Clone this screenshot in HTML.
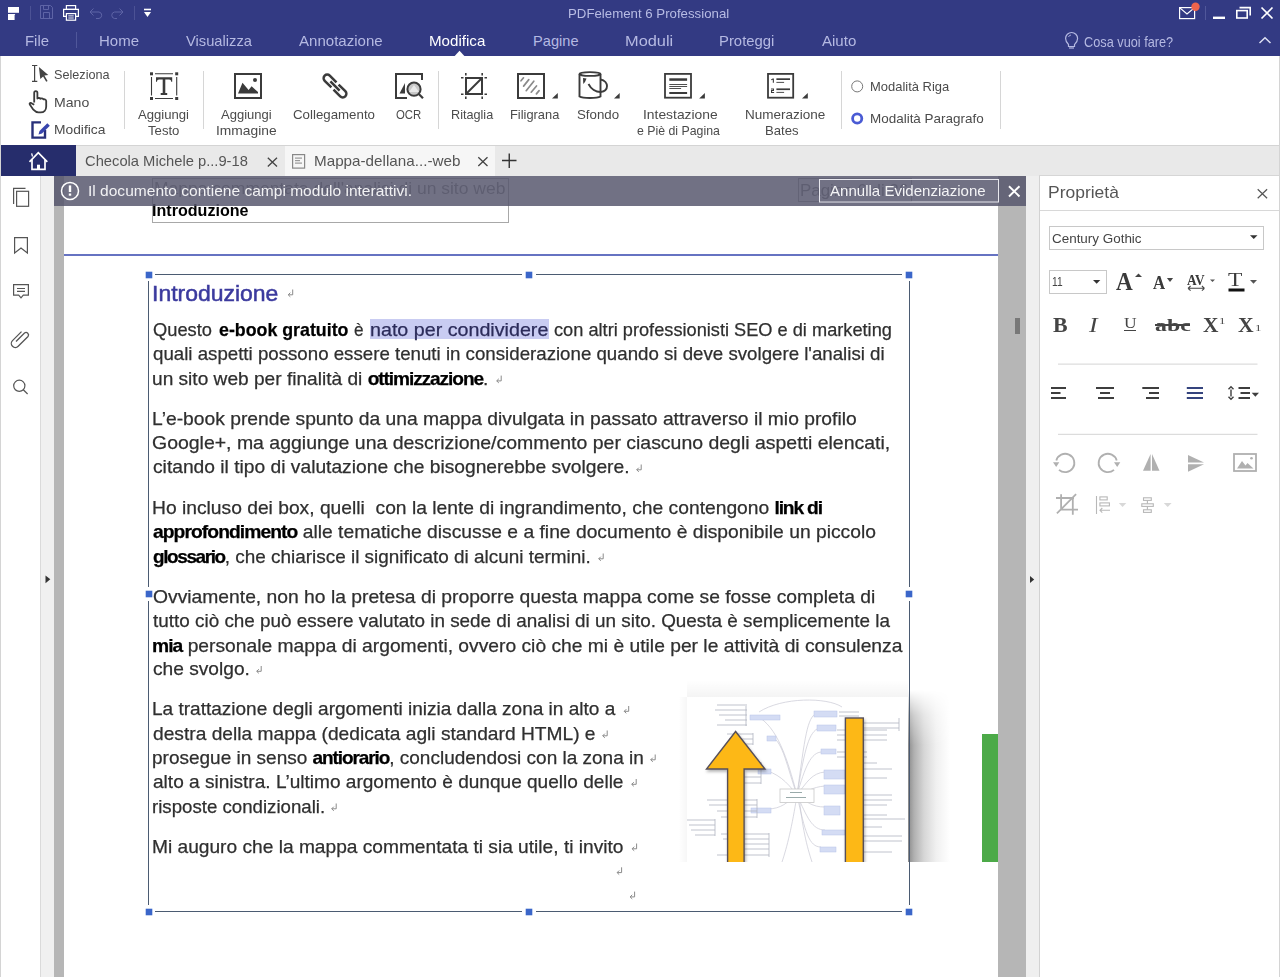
<!DOCTYPE html>
<html><head><meta charset="utf-8">
<style>
*{margin:0;padding:0;box-sizing:border-box}
html,body{width:1280px;height:977px;overflow:hidden;background:#fff;font-family:"Liberation Sans",sans-serif;position:relative}
.a{position:absolute}
.t{position:absolute;white-space:nowrap;line-height:1;transform-origin:0 0}
b{font-weight:700;color:#000}
svg{position:absolute;overflow:visible}
</style></head><body>
<div class="a" style="left:0;top:0;width:1280px;height:56px;background:#333a83"></div><svg style="left:0;top:0" width="200" height="28"><g fill="#fff"><rect x="8" y="7" width="11" height="5.8"/><path d="M8 14H15.3L14.6 15.2V20H8Z"/></g><rect x="30" y="6" width="1" height="14" fill="#4c5295"/><rect x="134" y="6" width="1" height="14" fill="#4c5295"/><g fill="none" stroke="#5e64a6" stroke-width="1"><path d="M40.5 5.5H50.5L52.5 7.5V18.5H40.5Z"/><path d="M43.5 5.5V9.5H48.5V5.5"/><path d="M43.5 18.5V12.5H49.5V18.5"/></g><g fill="none" stroke="#fff" stroke-width="1.2"><rect x="66.4" y="5.6" width="9.2" height="3.8"/><path d="M66.4 16.4H63.6V9.4H78.4V16.4H75.6"/><rect x="66.4" y="13.6" width="9.2" height="6.6"/></g><path d="M68.3 15.9H73.7M68.3 18H73.7" stroke="#fff" stroke-width="0.9"/><g fill="none" stroke="#5e64a6" stroke-width="1"><path d="M90.5 12H99A3.3 3.3 0 0 1 99 18.5H96"/><path d="M93.5 8.5L90 12L93.5 15.5"/><path d="M123 12H114.5A3.3 3.3 0 0 0 114.5 18.5H117"/><path d="M119.5 8.5L123 12L119.5 15.5"/></g><g fill="#fff"><rect x="144" y="8.7" width="7" height="1.6"/><path d="M144 12H151L147.5 16.9Z"/></g></svg><div class="t" style="left:567.72px;top:7.03px;font-size:13.50px;color:#b8bce4;font-weight:400;font-family:'Liberation Sans',sans-serif;transform:scaleX(0.9810);">PDFelement 6 Professional</div>
<svg style="left:1160px;top:0" width="120" height="28"><g fill="none" stroke="#fff" stroke-width="1.2"><rect x="19.6" y="7.6" width="15" height="11"/><path d="M19.6 7.6L27 14L34.6 7.6"/></g><circle cx="35.5" cy="6.8" r="4.2" fill="#f0644c"/><rect x="45" y="6" width="1" height="14" fill="#50579a"/><rect x="53" y="16.6" width="12" height="2.4" fill="#fff"/><g fill="none" stroke="#fff" stroke-width="1.6"><rect x="76.8" y="10.6" width="10.4" height="7.4"/><path d="M79.5 7.6H90.2V15.5"/></g><g stroke="#fff" stroke-width="1.7"><path d="M101.5 7.5L112.5 18.5M112.5 7.5L101.5 18.5"/></g></svg><div class="t" style="left:24.58px;top:34.09px;font-size:14.60px;color:#b5b9e2;font-weight:400;font-family:'Liberation Sans',sans-serif;transform:scaleX(1.0232);">File</div>
<div class="t" style="left:99.10px;top:34.09px;font-size:14.60px;color:#b5b9e2;font-weight:400;font-family:'Liberation Sans',sans-serif;transform:scaleX(1.0270);">Home</div>
<div class="t" style="left:185.60px;top:34.09px;font-size:14.60px;color:#b5b9e2;font-weight:400;font-family:'Liberation Sans',sans-serif;transform:scaleX(1.0078);">Visualizza</div>
<div class="t" style="left:298.60px;top:34.09px;font-size:14.60px;color:#b5b9e2;font-weight:400;font-family:'Liberation Sans',sans-serif;transform:scaleX(1.0309);">Annotazione</div>
<div class="t" style="left:429.06px;top:34.09px;font-size:14.60px;color:#ffffff;font-weight:400;font-family:'Liberation Sans',sans-serif;transform:scaleX(1.0370);">Modifica</div>
<div class="t" style="left:533.10px;top:34.09px;font-size:14.60px;color:#b5b9e2;font-weight:400;font-family:'Liberation Sans',sans-serif;">Pagine</div>
<div class="t" style="left:624.98px;top:34.09px;font-size:14.60px;color:#b5b9e2;font-weight:400;font-family:'Liberation Sans',sans-serif;transform:scaleX(1.1220);">Moduli</div>
<div class="t" style="left:718.58px;top:34.09px;font-size:14.60px;color:#b5b9e2;font-weight:400;font-family:'Liberation Sans',sans-serif;transform:scaleX(1.0189);">Proteggi</div>
<div class="t" style="left:822.10px;top:34.09px;font-size:14.60px;color:#b5b9e2;font-weight:400;font-family:'Liberation Sans',sans-serif;transform:scaleX(1.0303);">Aiuto</div>
<div class="t" style="left:1084.10px;top:34.69px;font-size:14.60px;color:#b5b9e2;font-weight:400;font-family:'Liberation Sans',sans-serif;transform:scaleX(0.8725);">Cosa vuoi fare?</div>
<svg style="left:0;top:28px" width="1280" height="28"><rect x="76" y="4" width="1" height="16" fill="#50579a"/><path d="M454.7 28L459.5 22.8L464.4 28Z" fill="#fff"/><g fill="none" stroke="#b5b9e2" stroke-width="1.2"><path d="M1068.5 16.5C1067 15 1065.6 13.5 1065.6 10.5A6 6 0 0 1 1077.6 10.5C1077.6 13.5 1076 15 1074.5 16.5V18.5H1068.5Z"/><path d="M1069 20H1074"/><path d="M1068.5 9A3 3 0 0 1 1071 7" stroke-width="0.9"/></g><path d="M1259.5 15L1265 9.8L1270.5 15" fill="none" stroke="#dfe1f2" stroke-width="1.5"/></svg><div class="a" style="left:0;top:56px;width:1280px;height:90px;background:#fff;border-left:1px solid #d4d4d4;border-right:1px solid #d4d4d4;border-bottom:1px solid #d4d4d4"></div><svg style="left:0;top:0" width="1280" height="145"><g fill="#d6d6d6"><rect x="124" y="71" width="1" height="58"/><rect x="203" y="71" width="1" height="58"/><rect x="438" y="71" width="1" height="58"/><rect x="841" y="71" width="1" height="58"/><rect x="1000" y="71" width="1" height="58"/></g><g fill="none" stroke="#444" stroke-width="1.2"><path d="M32 65.5H37.3M32 81.4H37.3M34.6 65.5V81.4"/></g><path d="M38.9 67.1L48.3 75.1L44.4 75.6L47.6 81L46.2 81.8L43.1 76.6L40.3 79Z" fill="#444"/><path d="M34.2 102.5V92.8A1.6 1.6 0 0 1 37.4 92.8V98.5C38 97.8 39.6 97.8 40.4 98.8C41.2 98.2 42.8 98.3 43.4 99.4C44.4 99 46.2 99.6 46.2 101V106.5C46.2 110 44 112.4 40.6 112.4H38.4C35.8 112.4 34.6 111 33.2 109.5L29.8 104.6C29.2 103.6 30 102.6 31 102.9L34.2 104.8" fill="none" stroke="#3b3b3b" stroke-width="1.8" stroke-linejoin="round"/><path d="M41 122.4H32.5V137.6H45V130" fill="none" stroke="#28307a" stroke-width="2.4"/><path d="M38.5 134.5L39.5 131L47.3 123.2L49.8 125.7L42 133.5Z" fill="#3845ad"/><g fill="#3b3b3b"><rect x="150" y="72.3" width="3" height="3"/><rect x="175.2" y="72.3" width="3" height="3"/><rect x="150" y="97" width="3" height="3"/><rect x="175.2" y="97" width="3" height="3"/></g><g stroke="#3b3b3b" stroke-width="1.1"><path d="M155 73.8H173M155 98.5H173M151.5 77V95.5M176.7 77V95.5"/></g><path d="M156 77.2H172.2V81.8H171.2C171 80.2 170.6 79.4 169 79.4H165.3V92.9H167.2V95H160.7V92.9H162.7V79.4H159.2C157.6 79.4 157.2 80.2 157 81.8H156Z" fill="#3b3b3b"/><rect x="235" y="74" width="26" height="24" fill="none" stroke="#3b3b3b" stroke-width="2"/><path d="M238 93.6L242.5 82.8L248.6 89.9L251.6 86.3L258 91.9V93.6Z" fill="#3b3b3b"/><circle cx="255" cy="80" r="2" fill="#3b3b3b"/><g transform="translate(335 86) rotate(45)" fill="none" stroke="#3b3b3b" stroke-width="2.5"><path d="M-1.5 -3.6H-11A3.6 3.6 0 0 0 -11 3.6H-1.5M1.5 -3.6H11A3.6 3.6 0 0 1 11 3.6H1.5M-6.5 0H6.5"/></g><path d="M407 98H396V74H422V80" fill="none" stroke="#3b3b3b" stroke-width="2"/><path d="M399.5 93.4L405 83V93.4Z" fill="#3b3b3b"/><circle cx="414" cy="89.2" r="6.6" fill="#c8c8c8" stroke="#3b3b3b" stroke-width="2"/><path d="M409 92L414 85L419 92Z" fill="#fff" opacity="0.6"/><path d="M418.8 94L423 98.3" stroke="#3b3b3b" stroke-width="2.2"/><rect x="466" y="78" width="16" height="16" fill="none" stroke="#3b3b3b" stroke-width="2"/><path d="M466.5 93.5L481.5 78.5" stroke="#3b3b3b" stroke-width="2"/><g stroke="#3b3b3b" stroke-width="1.6"><path d="M461 77.8H463.5M484.5 77.8H487M461 94.2H463.5M484.5 94.2H487M465.8 73V75.5M482.2 73V75.5M465.8 96.5V99M482.2 96.5V99"/></g><rect x="518" y="74" width="26" height="24" fill="none" stroke="#3b3b3b" stroke-width="2"/><g stroke="#8a8a8a" stroke-width="1.7" stroke-linecap="round"><path d="M521 80.8L523.5 77.8M523.6 86.1L528.8 79.6M526.2 90.7L533.8 81.2M531.2 92.2L536.5 86M536.4 93.9L539.1 90.6"/></g><path d="M552 98.6L557.8 93V98.6Z" fill="#3b3b3b"/><g fill="none" stroke="#3b3b3b" stroke-width="1.9"><ellipse cx="590" cy="74" rx="10.5" ry="1.9"/><path d="M579.5 74V96.5C583 98.5 597 98.5 600.5 96.5V74"/><path d="M588.5 84C591 89 596 92 600.5 92"/><path d="M600.5 79.5C605 80 607 83.5 607 86C607 89 604.5 91.5 600.5 92"/></g><path d="M583 78L586.5 78.5L585 82L583.3 84Z" fill="#3b3b3b"/><path d="M614 98.6L619.7 93V98.6Z" fill="#3b3b3b"/><rect x="665" y="73.9" width="26" height="23.8" fill="none" stroke="#3b3b3b" stroke-width="1.8"/><g fill="#3b3b3b"><rect x="669.3" y="78.3" width="17.8" height="2.5"/><rect x="669.3" y="84" width="17.8" height="0.9"/><rect x="669.3" y="86" width="17.8" height="0.9"/><rect x="669.3" y="88" width="11.8" height="0.9"/><rect x="669.3" y="92" width="17.8" height="2"/></g><path d="M699.2 98.6L704.9 93V98.6Z" fill="#3b3b3b"/><rect x="768" y="73.9" width="25.2" height="23.8" fill="none" stroke="#3b3b3b" stroke-width="1.8"/><g fill="#3b3b3b"><path d="M771.2 79.2L772.8 78.4H773.9V82.8H772.8V79.8L771.2 80.3Z"/><rect x="776.4" y="78.3" width="13.6" height="1.7"/><rect x="776.4" y="81.9" width="7.7" height="0.9"/><path d="M771 88.4H774V90.9H772.1V91.9H774.1V93H771V90H773V89.4H771Z"/><rect x="776.4" y="88.4" width="13.6" height="1.7"/><rect x="776.4" y="91.9" width="7.7" height="0.9"/></g><path d="M802 98.6L807.8 93V98.6Z" fill="#3b3b3b"/><circle cx="857.2" cy="86.4" r="5.5" fill="#fff" stroke="#777" stroke-width="1"/><circle cx="857.2" cy="118.5" r="4.6" fill="#fff" stroke="#4a5bd4" stroke-width="2.8"/></svg><div class="t" style="left:54.40px;top:68.62px;font-size:12.80px;color:#4b4b4b;font-weight:400;font-family:'Liberation Sans',sans-serif;transform:scaleX(0.9891);">Seleziona</div>
<div class="t" style="left:54.31px;top:96.62px;font-size:12.80px;color:#4b4b4b;font-weight:400;font-family:'Liberation Sans',sans-serif;transform:scaleX(1.1004);">Mano</div>
<div class="t" style="left:54.32px;top:124.32px;font-size:12.80px;color:#4b4b4b;font-weight:400;font-family:'Liberation Sans',sans-serif;transform:scaleX(1.0787);">Modifica</div>
<div class="t" style="left:137.60px;top:108.72px;font-size:12.80px;color:#4b4b4b;font-weight:400;font-family:'Liberation Sans',sans-serif;transform:scaleX(1.0246);">Aggiungi</div>
<div class="t" style="left:148.00px;top:124.52px;font-size:12.80px;color:#4b4b4b;font-weight:400;font-family:'Liberation Sans',sans-serif;transform:scaleX(1.0272);">Testo</div>
<div class="t" style="left:221.40px;top:108.72px;font-size:12.80px;color:#4b4b4b;font-weight:400;font-family:'Liberation Sans',sans-serif;transform:scaleX(1.0185);">Aggiungi</div>
<div class="t" style="left:215.73px;top:124.52px;font-size:12.80px;color:#4b4b4b;font-weight:400;font-family:'Liberation Sans',sans-serif;transform:scaleX(1.0782);">Immagine</div>
<div class="t" style="left:292.60px;top:108.72px;font-size:12.80px;color:#4b4b4b;font-weight:400;font-family:'Liberation Sans',sans-serif;transform:scaleX(1.0380);">Collegamento</div>
<div class="t" style="left:395.70px;top:108.72px;font-size:12.80px;color:#4b4b4b;font-weight:400;font-family:'Liberation Sans',sans-serif;transform:scaleX(0.8898);">OCR</div>
<div class="t" style="left:451.11px;top:108.72px;font-size:12.80px;color:#4b4b4b;font-weight:400;font-family:'Liberation Sans',sans-serif;transform:scaleX(0.9882);">Ritaglia</div>
<div class="t" style="left:510.39px;top:108.72px;font-size:12.80px;color:#4b4b4b;font-weight:400;font-family:'Liberation Sans',sans-serif;transform:scaleX(1.0043);">Filigrana</div>
<div class="t" style="left:576.54px;top:108.72px;font-size:12.80px;color:#4b4b4b;font-weight:400;font-family:'Liberation Sans',sans-serif;transform:scaleX(1.0389);">Sfondo</div>
<div class="t" style="left:642.72px;top:108.72px;font-size:12.80px;color:#4b4b4b;font-weight:400;font-family:'Liberation Sans',sans-serif;transform:scaleX(1.0824);">Intestazione</div>
<div class="t" style="left:636.80px;top:124.52px;font-size:12.80px;color:#4b4b4b;font-weight:400;font-family:'Liberation Sans',sans-serif;transform:scaleX(0.9629);">e Piè di Pagina</div>
<div class="t" style="left:745.34px;top:108.72px;font-size:12.80px;color:#4b4b4b;font-weight:400;font-family:'Liberation Sans',sans-serif;transform:scaleX(1.0560);">Numerazione</div>
<div class="t" style="left:764.58px;top:124.52px;font-size:12.80px;color:#4b4b4b;font-weight:400;font-family:'Liberation Sans',sans-serif;transform:scaleX(1.0253);">Bates</div>
<div class="t" style="left:869.59px;top:80.82px;font-size:12.80px;color:#4b4b4b;font-weight:400;font-family:'Liberation Sans',sans-serif;transform:scaleX(1.0130);">Modalità Riga</div>
<div class="t" style="left:869.55px;top:112.72px;font-size:12.80px;color:#4b4b4b;font-weight:400;font-family:'Liberation Sans',sans-serif;transform:scaleX(1.0514);">Modalità Paragrafo</div>
<div class="a" style="left:0;top:146px;width:1280px;height:30px;background:#e9e9e9"></div><div class="a" style="left:1039px;top:175px;width:241px;height:1px;background:#d6d6d6"></div><div class="a" style="left:0;top:145px;width:1px;height:832px;background:#d4d4d4"></div><div class="a" style="left:1279px;top:145px;width:1px;height:832px;background:#d4d4d4"></div><div class="a" style="left:1px;top:145px;width:75px;height:31px;background:#262d6c"></div><div class="a" style="left:285px;top:146px;width:210px;height:30px;background:#f6f6f6"></div><svg style="left:0;top:145px" width="1280" height="31"><g fill="none" stroke="#fff" stroke-width="1.7"><path d="M29.5 16.8L38.3 7.6L47.3 16.8"/><path d="M32 14.3V24.4H45V14.3"/></g><rect x="37" y="19.7" width="3" height="4.7" fill="#fff"/><path d="M31 8.5L32.3 8.2L33 11L32 12Z" fill="#fff"/><g stroke="#444" stroke-width="1.3"><path d="M267.8 12.8L277 21.5M277 12.8L267.8 21.5"/><path d="M478.3 12.3L487.5 21M487.5 12.3L478.3 21"/></g><g stroke="#333" stroke-width="1.4"><path d="M502 15.5H516.5M509.25 8.5V23"/></g><rect x="292.6" y="9.6" width="12" height="13.5" fill="#f6f6f6" stroke="#888" stroke-width="1.2"/><g fill="#999"><rect x="295" y="12.5" width="7" height="1.2"/><rect x="295" y="15" width="5" height="1.2"/><rect x="295" y="17.5" width="7" height="1.2"/></g></svg><div class="t" style="left:85.10px;top:153.86px;font-size:14.40px;color:#555;font-weight:400;font-family:'Liberation Sans',sans-serif;transform:scaleX(1.0233);">Checola Michele p...9-18</div>
<div class="t" style="left:313.64px;top:153.86px;font-size:14.40px;color:#555;font-weight:400;font-family:'Liberation Sans',sans-serif;transform:scaleX(1.0577);">Mappa-dellana...-web</div>
<div class="a" style="left:1px;top:176px;width:39px;height:801px;background:#fff"></div><div class="a" style="left:40px;top:176px;width:1px;height:801px;background:#dadada"></div><div class="a" style="left:41px;top:176px;width:13px;height:801px;background:#f0f0f0"></div><div class="a" style="left:54px;top:176px;width:10px;height:801px;background:#b6b6b6"></div><div class="a" style="left:64px;top:176px;width:934px;height:801px;background:#fff"></div><div class="a" style="left:998px;top:176px;width:28px;height:801px;background:#b6b6b6"></div><div class="a" style="left:1026px;top:176px;width:13px;height:801px;background:#efefef"></div><div class="a" style="left:1039px;top:176px;width:1px;height:801px;background:#d2d2d2"></div><div class="a" style="left:1015px;top:318px;width:5px;height:16px;background:#787878"></div><svg style="left:0;top:0" width="1280" height="977"><path d="M45.5 575.5L50.3 579.3L45.5 583.3Z" fill="#333"/><path d="M1030 576L1034.2 579.5L1030 583Z" fill="#333"/><g fill="none" stroke="#555" stroke-width="1.2"><path d="M13.6 204V188.3H25.5"/><rect x="16.6" y="191.3" width="12" height="15"/><path d="M14.6 237.6H27.4V253L21 248L14.6 253Z"/><path d="M13.6 284.6H28.4V295.2H23.3L21 297.8L18.7 295.2H13.6Z"/><path d="M17 288.5H25M17 291.4H25"/><path d="M16 341.5L24.5 333A2.5 2.5 0 0 1 28 336.5L18.2 346.3A4 4 0 0 1 12.5 340.6L21.5 331.6" stroke-width="1.3"/><circle cx="19.3" cy="385.8" r="5.6"/><path d="M23.3 389.8L27.6 394"/></g></svg><div class="a" style="left:152px;top:178px;width:357px;height:45px;border:1px solid #a8a8a8"></div><div class="a" style="left:798px;top:178px;width:114px;height:24px;border:1px solid #a8a8a8"></div><div class="t" style="left:153.59px;top:179.91px;font-size:17.40px;color:#8a8a8a;font-weight:400;font-family:'Liberation Sans',sans-serif;transform:scaleX(1.0057);">Mappa commentata dell'analisi di un sito web</div>
<div class="t" style="left:799.63px;top:181.71px;font-size:17.40px;color:#8a8a8a;font-weight:400;font-family:'Liberation Sans',sans-serif;transform:scaleX(0.9727);">Pagina 6 di 26</div>
<div class="t" style="left:152.14px;top:202.81px;font-size:16.70px;color:#000;font-weight:700;font-family:'Liberation Sans',sans-serif;transform:scaleX(0.9637);">Introduzione</div>
<div class="a" style="left:64px;top:254px;width:934px;height:2px;background:#6673c2"></div><div class="a" style="left:687px;top:680px;width:221px;height:17px;background:linear-gradient(rgba(0,0,0,0),rgba(0,0,0,0.045))"></div><div class="a" style="left:908px;top:690px;width:46px;height:172px;background:linear-gradient(90deg,#8a8a8a,#b0b0b0 6px,#d6d6d6 16px,#f0f0f0 28px,#fff 42px);-webkit-mask-image:linear-gradient(rgba(0,0,0,0),rgba(0,0,0,0.6) 25px,#000 55px)"></div><div class="a" style="left:679px;top:697px;width:8px;height:165px;background:linear-gradient(90deg,rgba(0,0,0,0),rgba(0,0,0,0.035))"></div><div class="a" style="left:982px;top:734px;width:16px;height:128px;background:#4caa48"></div><svg style="left:687px;top:697px;overflow:hidden" width="221" height="165"><rect x="0" y="0" width="221" height="165" fill="#fff"/><g fill="none" stroke="#c9c9d4" stroke-width="0.7"><path d="M110 98C100 60 90 30 70 19"/><path d="M110 98C100 70 96 45 85 40"/><path d="M110 98C100 85 90 75 75 73"/><path d="M110 98C100 105 95 112 80 112"/><path d="M110 98C118 40 120 20 130 16"/><path d="M110 98C118 50 122 35 132 31"/><path d="M110 98C118 70 124 55 135 55"/><path d="M110 98C120 85 125 76 138 75"/><path d="M110 98C120 95 125 90 138 89"/><path d="M110 98C120 105 125 110 138 110"/><path d="M110 98C120 120 125 133 138 133"/><path d="M110 98C118 135 122 150 134 150"/><path d="M110 98C105 130 100 150 95 165"/><path d="M112 98C115 130 120 150 125 165"/><path d="M72 15C95 0 140 0 155 10"/></g><g fill="#d4dcf4" stroke="#b8c4e8" stroke-width="0.5"><rect x="63" y="18" width="30" height="5"/><rect x="80" y="39" width="9" height="5"/><rect x="71" y="72" width="13" height="5"/><rect x="64" y="111" width="20" height="5"/><rect x="127" y="14" width="23" height="6"/><rect x="130" y="28" width="19" height="6"/><rect x="134" y="52" width="15" height="5"/><rect x="137" y="73" width="21" height="9"/><rect x="137" y="88" width="21" height="9"/><rect x="137" y="109" width="16" height="9"/><rect x="135" y="133" width="23" height="5"/><rect x="133" y="150" width="16" height="5"/></g><rect x="93" y="92" width="34" height="13.5" fill="#fff" stroke="#c8c8c8" stroke-width="0.8"/><g fill="#9aa"><rect x="103" y="95" width="12" height="1"/><rect x="99" y="100" width="20" height="1"/></g><g stroke="#b0b4c0" stroke-width="0.8" fill="none"><path d="M30 8H58M28 13H60M32 18H60M38 23H60M30 28H60M59 7V29"/><path d="M40 37H66M42 42H66M44 47H66M66 36V48"/><path d="M44 66H74M46 72H74M48 80H74M50 86H74M74 65V87"/><path d="M20 103H70M22 108H70M30 114H70M34 120H70M70 102V121"/><path d="M0 123H28M2 128H28M4 133H28M8 138H28M28 122V139"/><path d="M34 137H82M36 142H82M40 147H82M44 152H82M30 158H82M82 136V160"/><path d="M152 15H172M152 19H172M175 26H212M175 31H212M175 21V34M212 21V34"/><path d="M150 33H200M150 38H200M150 43H200"/><path d="M150 55H180M150 60H180M160 66H190M160 72H205"/><path d="M162 81H200M165 98H205M165 103H205M165 108H200"/><path d="M165 139H215M165 144H215M160 130H195M170 155H205M160 118H200M165 122H218"/></g><defs><filter id="ds" x="-30%" y="-30%" width="160%" height="160%"><feDropShadow dx="1" dy="2" stdDeviation="1.5" flood-color="#000" flood-opacity="0.3"/></filter></defs><g stroke="#57505a" stroke-width="1.4" fill="#fdb813" filter="url(#ds)"><path d="M48.6 34.5L19.5 72H40.6V170H57.1V72H78Z"/><rect x="158.4" y="21" width="17.9" height="150"/></g></svg><div class="a" style="left:370px;top:319px;width:179px;height:20px;background:#c9ccf2"></div><div class="t" style="left:152.11px;top:282.50px;font-size:22.00px;color:#3b3a9e;font-weight:400;font-family:'Liberation Sans',sans-serif;transform:scaleX(1.0437);-webkit-text-stroke:0.5px #3b3a9e;">Introduzione</div>
<div class="t" style="left:153.10px;top:345.39px;font-size:18.60px;color:#2f2f2f;font-weight:400;font-family:'Liberation Sans',sans-serif;transform:scaleX(1.0048);-webkit-text-stroke:0.25px;">quali aspetti possono essere tenuti in considerazione quando si deve svolgere l'analisi di</div>
<div class="t" style="left:152.07px;top:369.89px;font-size:18.60px;color:#2f2f2f;font-weight:400;font-family:'Liberation Sans',sans-serif;transform:scaleX(1.0277);-webkit-text-stroke:0.25px;">un sito web per finalità di <b style="letter-spacing:-1.057px">ottimizzazione</b>.</div>
<div class="t" style="left:152.06px;top:409.89px;font-size:18.60px;color:#2f2f2f;font-weight:400;font-family:'Liberation Sans',sans-serif;transform:scaleX(1.0361);-webkit-text-stroke:0.25px;">L’e-book prende spunto da una mappa divulgata in passato attraverso il mio profilo</div>
<div class="t" style="left:152.05px;top:434.09px;font-size:18.60px;color:#2f2f2f;font-weight:400;font-family:'Liberation Sans',sans-serif;transform:scaleX(1.0464);-webkit-text-stroke:0.25px;">Google+, ma aggiunge una descrizione/commento per ciascuno degli aspetti elencati,</div>
<div class="t" style="left:153.10px;top:458.49px;font-size:18.60px;color:#2f2f2f;font-weight:400;font-family:'Liberation Sans',sans-serif;transform:scaleX(1.0337);-webkit-text-stroke:0.25px;">citando il tipo di valutazione che bisognerebbe svolgere.</div>
<div class="t" style="left:152.07px;top:498.69px;font-size:18.60px;color:#2f2f2f;font-weight:400;font-family:'Liberation Sans',sans-serif;transform:scaleX(1.0348);-webkit-text-stroke:0.25px;">Ho incluso dei box, quelli&nbsp; con la lente di ingrandimento, che contengono <b style="letter-spacing:-1.143px">link di</b></div>
<div class="t" style="left:153.10px;top:523.29px;font-size:18.60px;color:#2f2f2f;font-weight:400;font-family:'Liberation Sans',sans-serif;transform:scaleX(1.0366);-webkit-text-stroke:0.25px;"><b style="letter-spacing:-0.906px">approfondimento</b> alle tematiche discusse e a fine documento è disponibile un piccolo</div>
<div class="t" style="left:153.10px;top:547.69px;font-size:18.60px;color:#2f2f2f;font-weight:400;font-family:'Liberation Sans',sans-serif;transform:scaleX(1.0175);-webkit-text-stroke:0.25px;"><b style="letter-spacing:-1.347px">glossario</b>, che chiarisce il significato di alcuni termini.</div>
<div class="t" style="left:153.10px;top:587.69px;font-size:18.60px;color:#2f2f2f;font-weight:400;font-family:'Liberation Sans',sans-serif;transform:scaleX(1.0368);-webkit-text-stroke:0.25px;">Ovviamente, non ho la pretesa di proporre questa mappa come se fosse completa di</div>
<div class="t" style="left:153.10px;top:611.89px;font-size:18.60px;color:#2f2f2f;font-weight:400;font-family:'Liberation Sans',sans-serif;transform:scaleX(1.0158);-webkit-text-stroke:0.25px;">tutto ciò che può essere valutato in sede di analisi di un sito. Questa è semplicemente la</div>
<div class="t" style="left:152.06px;top:636.69px;font-size:18.60px;color:#2f2f2f;font-weight:400;font-family:'Liberation Sans',sans-serif;transform:scaleX(1.0352);-webkit-text-stroke:0.25px;"><b style="letter-spacing:-0.923px">mia</b> personale mappa di argomenti, ovvero ciò che mi è utile per le attività di consulenza</div>
<div class="t" style="left:153.10px;top:660.39px;font-size:18.60px;color:#2f2f2f;font-weight:400;font-family:'Liberation Sans',sans-serif;transform:scaleX(1.0296);-webkit-text-stroke:0.25px;">che svolgo.</div>
<div class="t" style="left:152.08px;top:700.19px;font-size:18.60px;color:#2f2f2f;font-weight:400;font-family:'Liberation Sans',sans-serif;transform:scaleX(1.0232);-webkit-text-stroke:0.25px;">La trattazione degli argomenti inizia dalla zona in alto a</div>
<div class="t" style="left:153.10px;top:724.69px;font-size:18.60px;color:#2f2f2f;font-weight:400;font-family:'Liberation Sans',sans-serif;transform:scaleX(1.0317);-webkit-text-stroke:0.25px;">destra della mappa (dedicata agli standard HTML) e</div>
<div class="t" style="left:152.08px;top:748.69px;font-size:18.60px;color:#2f2f2f;font-weight:400;font-family:'Liberation Sans',sans-serif;transform:scaleX(1.0219);-webkit-text-stroke:0.25px;">prosegue in senso <b style="letter-spacing:-1.072px">antiorario</b>, concludendosi con la zona in</div>
<div class="t" style="left:153.10px;top:773.19px;font-size:18.60px;color:#2f2f2f;font-weight:400;font-family:'Liberation Sans',sans-serif;transform:scaleX(1.0251);-webkit-text-stroke:0.25px;">alto a sinistra. L’ultimo argomento è dunque quello delle</div>
<div class="t" style="left:152.10px;top:797.89px;font-size:18.60px;color:#2f2f2f;font-weight:400;font-family:'Liberation Sans',sans-serif;transform:scaleX(1.0029);-webkit-text-stroke:0.25px;">risposte condizionali.</div>
<div class="t" style="left:152.07px;top:837.79px;font-size:18.60px;color:#2f2f2f;font-weight:400;font-family:'Liberation Sans',sans-serif;transform:scaleX(1.0298);-webkit-text-stroke:0.25px;">Mi auguro che la mappa commentata ti sia utile, ti invito</div>
<div class="t" style="left:153.10px;top:320.89px;font-size:18.60px;color:#2f2f2f;font-weight:400;font-family:'Liberation Sans',sans-serif;transform:scaleX(0.9833);-webkit-text-stroke:0.25px;">Questo</div>
<div class="t" style="left:218.85px;top:320.89px;font-size:18.60px;color:#2f2f2f;font-weight:400;font-family:'Liberation Sans',sans-serif;transform:scaleX(0.9567);-webkit-text-stroke:0.25px;"><b>e-book gratuito</b></div>
<div class="t" style="left:353.60px;top:320.89px;font-size:18.60px;color:#2f2f2f;font-weight:400;font-family:'Liberation Sans',sans-serif;transform:scaleX(0.9229);-webkit-text-stroke:0.25px;">è</div>
<div class="t" style="left:370.29px;top:320.89px;font-size:18.60px;color:#2f2f2f;font-weight:400;font-family:'Liberation Sans',sans-serif;transform:scaleX(1.0584);-webkit-text-stroke:0.25px;"><span style="color:#2c2c5a">nato per condividere</span></div>
<div class="t" style="left:553.85px;top:320.89px;font-size:18.60px;color:#2f2f2f;font-weight:400;font-family:'Liberation Sans',sans-serif;transform:scaleX(0.9789);-webkit-text-stroke:0.25px;">con altri professionisti SEO e di marketing</div>
<svg style="left:0;top:0" width="1280" height="977"><g fill="none" stroke="#8a8a8a" stroke-width="1"><path d="M292.7 289.5V294.8H288.3M290.3 292.7L288.2 294.8L290.3 296.8"/><path d="M501.2 375.6V380.9H496.8M498.8 378.8L496.7 380.9L498.8 382.9"/><path d="M641.2 464.5V469.8H636.8M638.8 467.7L636.7 469.8L638.8 471.8"/><path d="M603.2 553.5V558.8H598.8M600.8 556.7L598.7 558.8L600.8 560.8"/><path d="M261.2 666.0V671.3H256.8M258.8 669.2L256.7 671.3L258.8 673.3"/><path d="M628.7 706.0V711.3H624.3M626.3 709.2L624.2 711.3L626.3 713.3"/><path d="M607.2 730.5V735.8H602.8M604.8 733.7L602.7 735.8L604.8 737.8"/><path d="M655.2 754.5V759.8H650.8M652.8 757.7L650.7 759.8L652.8 761.8"/><path d="M636.2 779.0V784.3H631.8M633.8 782.2L631.7 784.3L633.8 786.3"/><path d="M336.2 803.5V808.8H331.8M333.8 806.7L331.7 808.8L333.8 810.8"/><path d="M636.6 843.5V848.8H632.2M634.2 846.7L632.1 848.8L634.2 850.8"/><path d="M621.6 867.3V872.6H617.2M619.2 870.5L617.1 872.6L619.2 874.6"/><path d="M634.6 891.6V896.9H630.2M632.2 894.8L630.1 896.9L632.2 898.9"/></g></svg><svg style="left:0;top:0" width="1280" height="977"><g stroke="#4b5b72" stroke-width="1" fill="none"><path d="M155 274.5H522M536 274.5H902M155 911.5H522M536 911.5H902M148.5 281V587M148.5 601V905M909.5 281V587M909.5 601V905"/></g><g fill="#3b66c9"><rect x="145.7" y="271.7" width="6.6" height="6.6"/><rect x="525.7" y="271.7" width="6.6" height="6.6"/><rect x="905.7" y="271.7" width="6.6" height="6.6"/><rect x="145.7" y="590.7" width="6.6" height="6.6"/><rect x="905.7" y="590.7" width="6.6" height="6.6"/><rect x="145.7" y="908.7" width="6.6" height="6.6"/><rect x="525.7" y="908.7" width="6.6" height="6.6"/><rect x="905.7" y="908.7" width="6.6" height="6.6"/></g></svg><div class="a" style="left:54px;top:176px;width:972px;height:30px;background:rgba(86,86,108,0.84)"></div><svg style="left:0;top:176px" width="1280" height="30"><circle cx="70" cy="14.9" r="8.5" fill="none" stroke="#fff" stroke-width="1.5"/><rect x="68.8" y="9.4" width="2.4" height="6.6" fill="#fff"/><rect x="68.8" y="17.5" width="2.4" height="2.2" fill="#fff"/><rect x="819.5" y="3.5" width="179" height="22.5" fill="none" stroke="#e8e8ee" stroke-width="1"/><path d="M1009 10.2L1019.5 20.5M1019.5 10.2L1009 20.5" stroke="#fff" stroke-width="1.9"/></svg><div class="t" style="left:87.65px;top:183.92px;font-size:14.80px;color:#f2f2f4;font-weight:400;font-family:'Liberation Sans',sans-serif;transform:scaleX(1.0503);">Il documento contiene campi modulo interattivi.</div>
<div class="t" style="left:829.80px;top:183.94px;font-size:14.30px;color:#f4f4f6;font-weight:400;font-family:'Liberation Sans',sans-serif;transform:scaleX(1.0534);">Annulla Evidenziazione</div>
<div class="a" style="left:1040px;top:176px;width:239px;height:801px;background:#fff"></div><div class="a" style="left:1040px;top:210px;width:239px;height:1px;background:#d8d8d8"></div><div class="t" style="left:1047.55px;top:185.39px;font-size:16.60px;color:#555;font-weight:400;font-family:'Liberation Sans',sans-serif;transform:scaleX(1.0523);">Proprietà</div>
<svg style="left:0;top:0" width="1280" height="977"><path d="M1257.7 189.2L1267.1 198.3M1267.1 189.2L1257.7 198.3" stroke="#555" stroke-width="1.2"/><rect x="1049.5" y="226.5" width="214" height="23" fill="#fff" stroke="#c8c8c8"/><path d="M1250 235.3H1257.5L1253.75 239Z" fill="#333"/><rect x="1049.5" y="270.5" width="57" height="23" fill="#fff" stroke="#c8c8c8"/><path d="M1093 280H1100.3L1096.65 283.8Z" fill="#333"/><path d="M1135 277L1138.5 273.5L1142 277Z" fill="#444"/><path d="M1166.9 278H1173.1L1170 281.9Z" fill="#444"/><path d="M1210 279.4H1215L1212.5 281.9Z" fill="#555"/><path d="M1250 280H1257L1253.5 283.8Z" fill="#555"/><path d="M1188 288.3H1204.5M1188 288.3L1190.6 286M1188 288.3L1190.6 290.6M1204.5 288.3L1201.9 286M1204.5 288.3L1201.9 290.6" fill="none" stroke="#444" stroke-width="1.1"/><rect x="1228.5" y="288.5" width="16" height="3" fill="#111"/><rect x="1058" y="363.6" width="199.5" height="1" fill="#d4d4d4"/><rect x="1058" y="433.8" width="199.5" height="1" fill="#d4d4d4"/><g fill="#3e3e3e"><rect x="1051" y="387" width="15" height="2"/><rect x="1051" y="392" width="9.5" height="2"/><rect x="1051" y="397" width="15" height="2"/><rect x="1096" y="387" width="18" height="2"/><rect x="1100" y="392" width="10" height="2"/><rect x="1098" y="397" width="16" height="2"/><rect x="1142.3" y="387" width="16.7" height="2"/><rect x="1149" y="392" width="10" height="2"/><rect x="1146" y="397" width="13" height="2"/><rect x="1238.5" y="387" width="11.5" height="2"/><rect x="1240.5" y="392" width="9.5" height="2"/><rect x="1238.5" y="397" width="11.5" height="2"/><path d="M1251.7 392.8H1259L1255.35 396.7Z"/></g><path d="M1231 389.5V396.5M1228.5 389.3L1231 386.8L1233.5 389.3M1228.5 396.7L1231 399.2L1233.5 396.7" fill="none" stroke="#3e3e3e" stroke-width="1.4"/><g fill="#35447e"><rect x="1186.8" y="387" width="16.2" height="2"/><rect x="1186.8" y="392" width="16.2" height="2"/><rect x="1186.8" y="397" width="16.2" height="2"/></g><g fill="none" stroke="#b0b0b0" stroke-width="1.8"><path d="M1056.3 460.5A9.2 9.2 0 1 1 1059 469.8"/><path d="M1116.7 460.5A9.2 9.2 0 1 0 1114 469.8"/><rect x="1234" y="454" width="22" height="17"/><path d="M1056 498H1074M1061.1 494.2V509.7H1078M1072.8 498V514.8M1056.9 513.4L1076.1 494.2"/></g><g fill="none" stroke="#b8b8b8" stroke-width="1.1"><path d="M1096.5 496V514"/><rect x="1099.9" y="496.9" width="7.3" height="3"/><rect x="1099.9" y="502.9" width="9.5" height="3"/><path d="M1100 510.3H1110M1102.3 508L1100 510.3L1102.3 512.6"/><rect x="1143.5" y="497.8" width="7.8" height="2.6"/><rect x="1141.8" y="503.8" width="11.5" height="2.6"/><rect x="1143.5" y="509.8" width="7.8" height="2.6"/><path d="M1147.4 500.4V503.8M1147.4 506.4V509.8"/></g><g fill="#b0b0b0"><path d="M1053 462.3L1056.2 467L1059.3 462.3Z"/><path d="M1114 462.3L1117.2 467L1120.3 462.3Z"/><path d="M1143 470.8H1150.6V453.9Z"/><path d="M1152 470.8H1159.5L1152 453.9Z"/><path d="M1188 455V462.6H1204Z"/><path d="M1188 471.8V464.2H1204Z"/><path d="M1237 468.5L1242 461L1245.5 465.5L1247.5 463L1253.5 468.5Z"/><circle cx="1251.5" cy="458.3" r="1.3"/></g><g fill="#d8d8d8"><path d="M1118.8 503.1H1126.3L1122.55 506.9Z"/><path d="M1163.8 503.1H1171.6L1167.7 506.9Z"/></g></svg><div class="t" style="left:1052.10px;top:231.88px;font-size:13.20px;color:#444;font-weight:400;font-family:'Liberation Sans',sans-serif;transform:scaleX(1.0182);">Century Gothic</div>
<div class="t" style="left:1052.22px;top:276.22px;font-size:12.80px;color:#444;font-weight:400;font-family:'Liberation Sans',sans-serif;transform:scaleX(0.7973);">11</div>
<div class="t" style="left:1115.60px;top:269.92px;font-size:24.50px;color:#3a3a3a;font-weight:700;font-family:'Liberation Serif',serif;transform:scaleX(0.9444);">A</div>
<div class="t" style="left:1153.10px;top:275.48px;font-size:17.80px;color:#3a3a3a;font-weight:700;font-family:'Liberation Serif',serif;transform:scaleX(0.9434);">A</div>
<div class="t" style="left:1187.10px;top:271.63px;font-size:15.20px;color:#3a3a3a;font-weight:700;font-family:'Liberation Serif',serif;transform:scaleX(0.8757);">AV</div>
<div class="t" style="left:1228.10px;top:270.00px;font-size:19.40px;color:#3a3a3a;font-weight:400;font-family:'Liberation Serif',serif;transform:scaleX(1.2098);">T</div>
<div class="t" style="left:1052.60px;top:314.55px;font-size:20.30px;color:#444;font-weight:700;font-family:'Liberation Serif',serif;transform:scaleX(1.0769);">B</div>
<div class="t" style="left:1089.40px;top:314.55px;font-size:20.30px;color:#444;font-weight:400;font-family:'Liberation Serif',serif;transform:scaleX(1.2676);font-style:italic;">I</div>
<div class="t" style="left:1123.85px;top:315.65px;font-size:15.00px;color:#444;font-weight:400;font-family:'Liberation Serif',serif;transform:scaleX(1.1605);">U</div>
<div class="a" style="left:1124px;top:329.5px;width:12px;height:1.3px;background:#444"></div><div class="t" style="left:1154.60px;top:316.88px;font-size:17.50px;color:#444;font-weight:700;font-family:'Liberation Serif',serif;transform:scaleX(1.3621);">abc</div>
<div class="a" style="left:1155px;top:324.2px;width:35px;height:1.6px;background:#444"></div><div class="t" style="left:1202.80px;top:314.55px;font-size:20.30px;color:#444;font-weight:700;font-family:'Liberation Serif',serif;transform:scaleX(1.0546);">X</div>
<div class="t" style="left:1219.27px;top:317.43px;font-size:9.00px;color:#444;font-weight:400;font-family:'Liberation Serif',serif;transform:scaleX(1.4222);">1</div>
<div class="t" style="left:1237.60px;top:314.55px;font-size:20.30px;color:#444;font-weight:700;font-family:'Liberation Serif',serif;transform:scaleX(1.0667);">X</div>
<div class="t" style="left:1254.77px;top:324.03px;font-size:9.00px;color:#444;font-weight:400;font-family:'Liberation Serif',serif;transform:scaleX(1.4222);">1</div>
</body></html>
